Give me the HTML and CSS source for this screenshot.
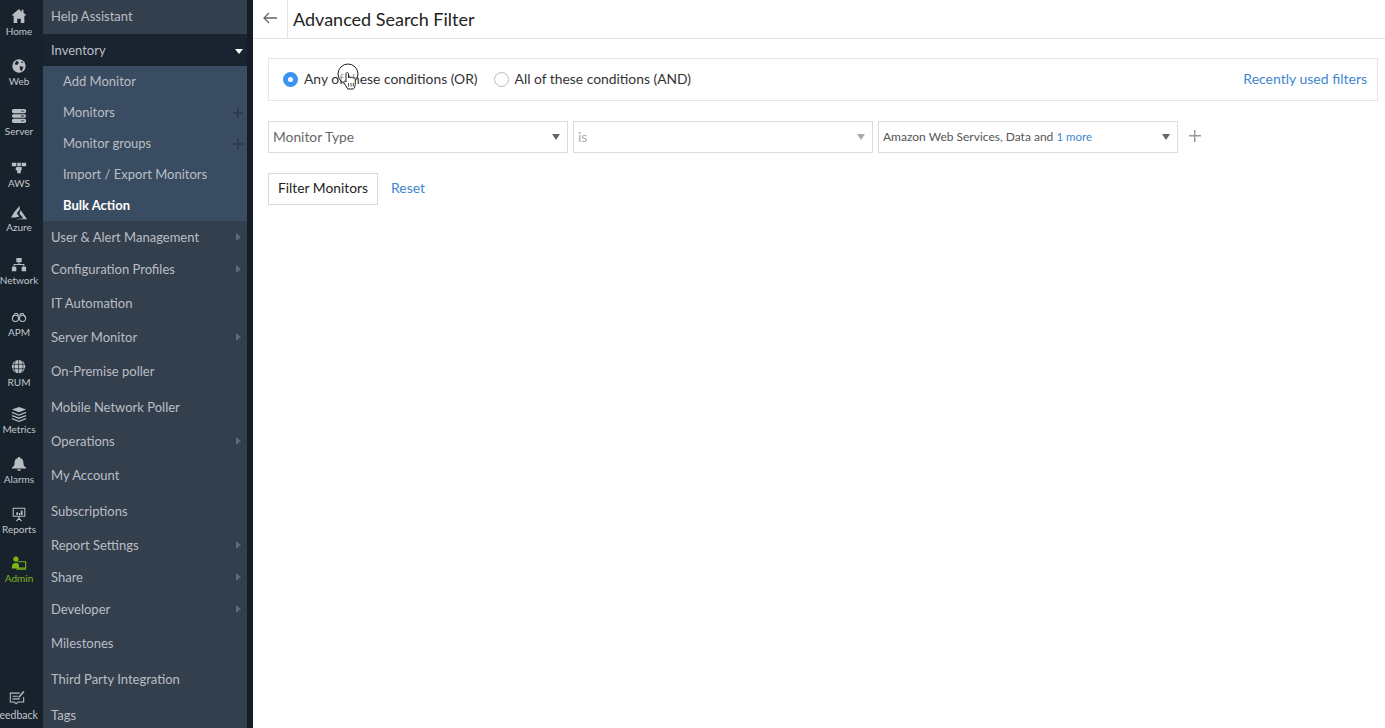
FILE: index.html
```html
<!DOCTYPE html>
<html lang="en">
<head>
  <meta charset="UTF-8">
  <meta name="viewport" content="width=device-width, initial-scale=1">
  <title>Advanced Search Filter</title>
  <link rel="stylesheet" href="styles.css">
</head>
<body>

  <nav class="rail">
    <a class="rail-item h50">
      <svg viewBox="0 0 18 18"><path d="M9 1 1 8l1 1 1-.8V17h4v-5h4v5h4V8.200l1 .8 1-1-3-2.600V2h-2v2.600z"/></svg>
      <span>Home</span>
    </a>
    <a class="rail-item h50">
      <svg viewBox="0 0 18 18"><circle cx="9" cy="9" r="7.500"/><path class="cut" d="M6 3 9 5 7 8 4 7zM10 9l4 1-2 5-2-2zM12 3l2 2-2 1z"/></svg>
      <span>Web</span>
    </a>
    <a class="rail-item h52">
      <svg viewBox="0 0 18 18"><path d="M3 1h12a2 2 0 0 1 2 2v1a2 2 0 0 1-2 2H3a2 2 0 0 1-2-2V3a2 2 0 0 1 2-2zM3 7h12a2 2 0 0 1 2 2v0a2 2 0 0 1-2 2H3a2 2 0 0 1-2-2v0a2 2 0 0 1 2-2zM3 12h12a2 2 0 0 1 2 2v1a2 2 0 0 1-2 2H3a2 2 0 0 1-2-2v-1a2 2 0 0 1 2-2z"/><path class="cut" d="M11 3h4v1h-4zM11 8.500h4v1h-4zM11 14h4v1h-4z"/></svg>
      <span>Server</span>
    </a>
    <a class="rail-item h44">
      <svg viewBox="0 0 18 18"><path d="M1 3h5v4H1zM7 3h4v4H7zM12 3h5v4h-5zM6 8h6v3l-1 1v3H7v-3l-2-1z"/></svg>
      <span>AWS</span>
    </a>
    <a class="rail-item h53 azure">
      <svg viewBox="0 0 18 18"><path d="M9.500 1 4 7.500 0 14h5l4.500-1-3-3.500 3.500-5zM10.800 5.500 18 16H5l9-1.200-4.500-5z"/></svg>
      <span>Azure</span>
    </a>
    <a class="rail-item h52">
      <svg viewBox="0 0 18 18"><path d="M6 1h6v5H9.500v2H15v3h2v5h-5v-5h2V9H4v2h2v5H1v-5h2V8h5.500V6H6z"/></svg>
      <span>Network</span>
    </a>
    <a class="rail-item h50">
      <svg viewBox="0 0 18 18"><path class="line" d="M4.500 5h2.500l1 2h2l1-2h2.500l3 5M1.500 10l3-5"/><circle class="line" cx="5" cy="10.500" r="3.500"/><circle class="line" cx="13" cy="10.500" r="3.500"/></svg>
      <span>APM</span>
    </a>
    <a class="rail-item h47">
      <svg viewBox="0 0 18 18"><circle cx="8.500" cy="8.500" r="7.500"/><path class="cutline" d="M1 6h15M1 11h15M8.500 1v15M5 2c-2 4-2 9 0 13M12 2c2 4 2 9 0 13"/></svg>
      <span>RUM</span>
    </a>
    <a class="rail-item h50">
      <svg viewBox="0 0 18 18"><path d="M9 1l8 3-8 3-8-3zM1 6.500l8 3 8-3v1.500l-8 3-8-3zM1 10l8 3 8-3v1.500l-8 3-8-3zM1 13.500l8 3 8-3V15l-8 3-8-3z"/></svg>
      <span>Metrics</span>
    </a>
    <a class="rail-item h50">
      <svg viewBox="0 0 18 18"><path d="M9 1c1 0 1.500.7 1.500 1.500C13 3 14 5 14 8c0 3 1 4 3 5v1H1v-1c2-1 3-2 3-5 0-3 1-5 3.500-5.500C7.500 1.700 8 1 9 1zM7 15h4a2 2 0 0 1-4 0z"/></svg>
      <span>Alarms</span>
    </a>
    <a class="rail-item h49">
      <svg viewBox="0 0 18 18"><path class="line" d="M2.500 2.500h13v9h-13zM9 12v2M9 14l-3 3M9 14l3 3"/><path d="M6 7h2v3H6zM9 8h1.500v2H9zM11 5h2v5h-2z"/></svg>
      <span>Reports</span>
    </a>
    <a class="rail-item active">
      <svg viewBox="0 0 18 18"><circle cx="5.500" cy="3.500" r="3"/><path d="M1 14c0-4 1-6 4.500-6S9 9 9 14z"/><path class="line" d="M7.500 6.500h9v7h-9"/><path d="M6 14h11v1.500H6z"/></svg>
      <span>Admin</span>
    </a>
    <a class="rail-item feedback">
      <svg viewBox="0 0 18 18"><path class="line" d="M12 3.500H1.500v10H6l2 2 2-2h6.500V8"/><path class="line" d="M4 7h6M4 10h8"/><path d="M16 1l1.500 1-5 6-2 1 .5-2z"/></svg>
      <span>Feedback</span>
    </a>
  </nav>

  <ul class="menu">
    <li class="row tall first">Help Assistant</li>
    <li class="row open">Inventory <i class="caret-down"></i></li>
    <li class="sub">
      <a>Add Monitor</a>
      <a>Monitors <i class="plus"></i></a>
      <a>Monitor groups <i class="plus"></i></a>
      <a>Import / Export Monitors</a>
      <a class="current">Bulk Action</a>
    </li>
    <li class="row">User &amp; Alert Management <i class="caret"></i></li>
    <li class="row">Configuration Profiles <i class="caret"></i></li>
    <li class="row tall">IT Automation</li>
    <li class="row">Server Monitor <i class="caret"></i></li>
    <li class="row tall">On-Premise poller</li>
    <li class="row tall">Mobile Network Poller</li>
    <li class="row">Operations <i class="caret"></i></li>
    <li class="row tall">My Account</li>
    <li class="row tall">Subscriptions</li>
    <li class="row">Report Settings <i class="caret"></i></li>
    <li class="row">Share <i class="caret"></i></li>
    <li class="row">Developer <i class="caret"></i></li>
    <li class="row tall">Milestones</li>
    <li class="row tall">Third Party Integration</li>
    <li class="row tall">Tags</li>
  </ul>

  <main class="content">
    <header class="topbar">
      <a class="back">
        <svg viewBox="0 0 14 12" width="14" height="12"><path d="M6 1 1 6l5 5M1 6h13" fill="none" stroke="#666" stroke-width="1.300"/></svg>
      </a>
      <h1>Advanced Search Filter</h1>
    </header>

    <section class="filter">
      <div class="conditions">
        <label class="radio"><i class="dot on"></i>Any of these conditions (OR)</label>
        <label class="radio"><i class="dot"></i>All of these conditions (AND)</label>
        <a class="link recent">Recently used filters</a>
      </div>

      <div class="criteria">
        <div class="select">Monitor Type <i class="arrow"></i></div>
        <div class="select disabled">is <i class="arrow"></i></div>
        <div class="select small">Amazon Web Services, Data and&nbsp;<span class="link">1 more</span> <i class="arrow"></i></div>
        <span class="add"></span>
      </div>

      <div class="actions">
        <button class="btn">Filter Monitors</button>
        <a class="link">Reset</a>
      </div>
    </section>
  </main>

  <!-- pointer from the screen recording -->
  <div class="pointer">
    <svg viewBox="0 0 24 30" width="24" height="30">
      <circle cx="11" cy="11" r="10" fill="rgba(255,255,255,.55)" stroke="#222" stroke-width="1"/>
      <path d="M9 11c0-2 2.500-2 2.500 0v4c0-1.500 2.500-1.500 2.500 0 0-1 2.300-1 2.300.3 .5-.6 2-.3 2 .9v5c0 2-1 3.800-2 4.800h-5.500L7 20c-1-1.500 .5-2.500 2-1z" fill="#fff" stroke="#222" stroke-width="1"/>
      <path d="M11.500 20v3.500M14 20v3.500M16.300 20v3.500" stroke="#222" stroke-width=".8"/>
    </svg>
  </div>

</body>
</html>
```

FILE: styles.css
```css
* {
  box-sizing: border-box;
}

html, body {
  height: 100%;
}

body {
  margin: 0;
  display: flex;
  height: 728px;
  overflow: hidden;
  background: #fff;
  font-family: "Lato", sans-serif;
  color: #333;
}

a {
  cursor: pointer;
}

/* --- icon rail --- */
.rail {
  flex: none;
  width: 43px;
  display: flex;
  flex-direction: column;
  padding: 7px 5px 0 0;
  overflow: hidden;
  background: #18222d;
}

.rail-item {
  flex: none;
  display: flex;
  flex-direction: column;
  align-items: center;
  color: #c2c7cc;
  font-size: 10px;
  line-height: 12px;
}

.rail-item svg {
  width: 16px;
  height: 18px;
  fill: #b9bec3;
}

.rail-item span {
  white-space: nowrap;
}

.rail-item .cut {
  fill: #18222d;
}

.rail-item .cutline {
  fill: none;
  stroke: #18222d;
  stroke-width: .8;
}

.rail-item .line {
  fill: none;
  stroke: #b9bec3;
  stroke-width: 1.200;
}

.h44 { height: 44px; }
.h47 { height: 47px; }
.h49 { height: 49px; }
.h50 { height: 50px; }
.h52 { height: 52px; }
.h53 { height: 53px; }

.rail-item.azure svg {
  margin-top: 1px;
  margin-bottom: -1px;
}

.rail-item.active {
  color: #7cb518;
}

.rail-item.active svg {
  fill: #7cb518;
  margin-top: 1px;
  margin-bottom: -1px;
}

.rail-item.active .line {
  stroke: #7cb518;
}

.rail-item.feedback {
  margin-top: auto;
  margin-bottom: 7px;
  align-items: flex-start;
}

.rail-item.feedback svg {
  margin: 0 0 2px 9px;
}

.rail-item.feedback span {
  margin-left: -6px;
  font-size: 10.500px;
}

/* --- menu --- */
.menu {
  flex: none;
  width: 210px;
  margin: 0;
  padding: 0;
  list-style: none;
  overflow: hidden;
  background: #343f4e;
  border-right: 6px solid #151e28;
  color: #b9bec4;
  font-size: 13px;
}

.row {
  position: relative;
  display: flex;
  align-items: center;
  height: 32px;
  padding-left: 8px;
}

.row.tall {
  height: 36px;
}

.row.first {
  margin-top: -2px;
}

.row.open {
  background: #1a2430;
  margin-right: -6px;
}

.sub {
  padding: 0;
  background: #3a4c62;
}

.sub a {
  position: relative;
  display: flex;
  align-items: center;
  height: 31px;
  padding: 0 0 1px 20px;
}

.sub a.current {
  color: #fff;
  font-weight: 700;
}

.caret {
  position: absolute;
  right: 6px;
  top: 50%;
  margin-top: -4px;
  border-left: 5px solid #5f6a78;
  border-top: 4px solid transparent;
  border-bottom: 4px solid transparent;
}

.caret-down {
  position: absolute;
  right: 10px;
  top: 50%;
  margin-top: -1px;
  border-top: 5px solid #fff;
  border-left: 4px solid transparent;
  border-right: 4px solid transparent;
}

.plus {
  position: absolute;
  right: 4px;
  top: 50%;
  width: 10px;
  height: 10px;
  margin-top: -5px;
  background:
    linear-gradient(#2e3b4c, #2e3b4c) center / 100% 2px no-repeat,
    linear-gradient(#2e3b4c, #2e3b4c) center / 2px 100% no-repeat;
}

/* --- main area --- */
.content {
  flex: 1;
  min-width: 0;
}

.topbar {
  display: flex;
  align-items: center;
  height: 39px;
  border-bottom: 1px solid #e4e4e4;
}

.back {
  display: flex;
  align-items: center;
  justify-content: center;
  width: 35px;
  height: 100%;
  padding-bottom: 3px;
  border-right: 1px solid #e4e4e4;
}

.topbar h1 {
  margin: 0 0 0 5px;
  font-size: 18px;
  font-weight: 400;
  color: #222;
}

.filter {
  padding: 19px 7px 0 15px;
}

.conditions {
  display: flex;
  align-items: center;
  height: 43px;
  padding: 0 10px 0 14px;
  border: 1px solid #e6e6e6;
  font-size: 13.850px;
  color: #333;
}

.radio {
  display: flex;
  align-items: center;
  margin-right: 16px;
  padding-bottom: 2px;
}

.dot {
  width: 15px;
  height: 15px;
  margin: 2px 6px 0 0;
  border: 1px solid #bbb;
  border-radius: 50%;
  background: #fff;
}

.dot.on {
  border: 5px solid #3b93f0;
}

.link {
  color: #3f86cf;
}

.recent {
  margin-left: auto;
  padding-bottom: 2px;
  font-size: 14px;
}

.criteria {
  display: flex;
  align-items: center;
  gap: 5px;
  margin-top: 20px;
}

.select {
  position: relative;
  display: flex;
  align-items: center;
  width: 300px;
  height: 32px;
  padding: 0 0 2px 4px;
  border: 1px solid #dcdcdc;
  font-size: 13.800px;
  color: #666;
}

.select.disabled {
  color: #aaa;
}

.select.disabled .arrow {
  border-top-color: #aaa;
}

.select.small {
  font-size: 12px;
  color: #555;
}

.select.small .link {
  font-size: 11.500px;
}

.arrow {
  position: absolute;
  right: 7px;
  top: 12px;
  border-top: 6px solid #666;
  border-left: 4px solid transparent;
  border-right: 4px solid transparent;
}

.add {
  width: 12px;
  height: 12px;
  margin: -2px 0 0 6px;
  background:
    linear-gradient(#999, #999) center / 100% 1.500px no-repeat,
    linear-gradient(#999, #999) center / 1.500px 100% no-repeat;
}

.actions {
  display: flex;
  align-items: center;
  gap: 13px;
  margin-top: 20px;
  font-size: 13.800px;
}

.actions .link {
  padding-bottom: 3px;
  font-size: 14px;
}

.btn {
  width: 110px;
  height: 32px;
  padding: 0 0 3px;
  border: 1px solid #d8d8d8;
  background: #fff;
  font: inherit;
  color: #222;
}

.pointer {
  position: absolute;
  left: 337px;
  top: 63px;
  line-height: 0;
}
```
